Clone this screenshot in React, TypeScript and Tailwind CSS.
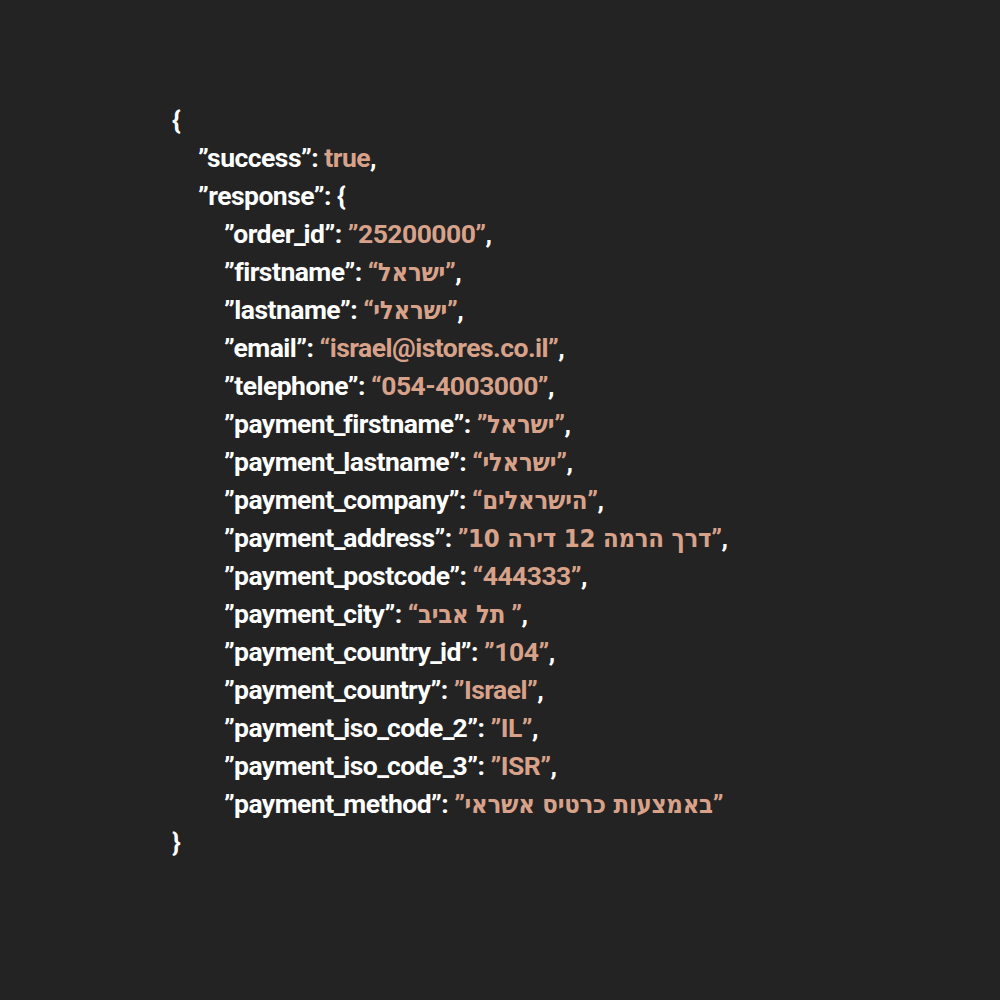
import React from "react";

type Line = { indent: number; key?: string; open?: string; value?: string; close?: string; hebrew?: boolean; comma?: boolean; raw?: string; rawValue?: string; tail?: string };

const lines: Line[] = [
  { indent: 0, raw: "{" },
  { indent: 1, key: "success", rawValue: "true", comma: true },
  { indent: 1, key: "response", tail: " {" },
  { indent: 2, key: "order_id", open: "\u201D", value: "25200000", close: "\u201D", comma: true },
  { indent: 2, key: "firstname", open: "\u201C", value: "ישראל", close: "\u201D", hebrew: true, comma: true },
  { indent: 2, key: "lastname", open: "\u201C", value: "ישראלי", close: "\u201D", hebrew: true, comma: true },
  { indent: 2, key: "email", open: "\u201C", value: "israel@istores.co.il", close: "\u201D", comma: true },
  { indent: 2, key: "telephone", open: "\u201C", value: "054-4003000", close: "\u201D", comma: true },
  { indent: 2, key: "payment_firstname", open: "\u201D", value: "ישראל", close: "\u201D", hebrew: true, comma: true },
  { indent: 2, key: "payment_lastname", open: "\u201C", value: "ישראלי", close: "\u201D", hebrew: true, comma: true },
  { indent: 2, key: "payment_company", open: "\u201C", value: "הישראלים", close: "\u201D", hebrew: true, comma: true },
  { indent: 2, key: "payment_address", open: "\u201D", value: "דרך הרמה 12 דירה 10", close: "\u201D", hebrew: true, comma: true },
  { indent: 2, key: "payment_postcode", open: "\u201C", value: "444333", close: "\u201D", comma: true },
  { indent: 2, key: "payment_city", open: "\u201C", value: "תל אביב", close: " \u201D", hebrew: true, comma: true },
  { indent: 2, key: "payment_country_id", open: "\u201D", value: "104", close: "\u201D", comma: true },
  { indent: 2, key: "payment_country", open: "\u201D", value: "Israel", close: "\u201D", comma: true },
  { indent: 2, key: "payment_iso_code_2", open: "\u201D", value: "IL", close: "\u201D", comma: true },
  { indent: 2, key: "payment_iso_code_3", open: "\u201D", value: "ISR", close: "\u201D", comma: true },
  { indent: 2, key: "payment_method", open: "\u201D", value: "באמצעות כרטיס אשראי", close: "\u201D", hebrew: true },
];

function Key({ name }: { name: string }) {
  const parts = name.split("_");
  return (
    <span>
      {"\u201D"}
      {parts.map((p, i) => (
        <React.Fragment key={i}>
          {i > 0 && <span className="tracking-[-0.08em]">_</span>}
          {p}
        </React.Fragment>
      ))}
      {"\u201D: "}
    </span>
  );
}

export default function App() {
  const all = [...lines, { indent: 0, raw: "}" } as Line];
  return (
    <div
      className="w-[1000px] h-[1000px] bg-[#232323] text-white pl-[172px] pt-[101px] text-[26.5px] font-bold tracking-[-0.02em]"
      style={{ fontFamily: "Roboto, 'Liberation Sans', 'DejaVu Sans', sans-serif" }}
    >
      <div className="flex flex-col">
        {all.map((l, i) => (
          <div
            key={i}
            dir="ltr"
            className={
              "h-[38px] leading-[38px] whitespace-pre " +
              (l.indent === 0 ? "pl-0" : l.indent === 1 ? "pl-[26px]" : "pl-[52px]")
            }
          >
            {l.raw !== undefined ? (
              <span>{l.raw}</span>
            ) : (
              <>
                <Key name={l.key!} />
                {l.rawValue !== undefined && <span className="text-[#d8a28a]">{l.rawValue}</span>}
                {l.value !== undefined && (
                  <span className="text-[#d8a28a]">
                    {l.open}
                    {l.hebrew ? (
                      <bdi
                        dir="rtl"
                        className="font-bold tracking-[-0.01em] text-[25.5px] [font-family:'DejaVu_Sans_Condensed','DejaVu_Sans',sans-serif]"
                      >
                        {l.value}
                      </bdi>
                    ) : (
                      l.value
                    )}
                    {l.close}
                  </span>
                )}
                {l.tail && <span>{l.tail.trim()}</span>}
                {l.comma && <span>,</span>}
              </>
            )}
          </div>
        ))}
      </div>
    </div>
  );
}
